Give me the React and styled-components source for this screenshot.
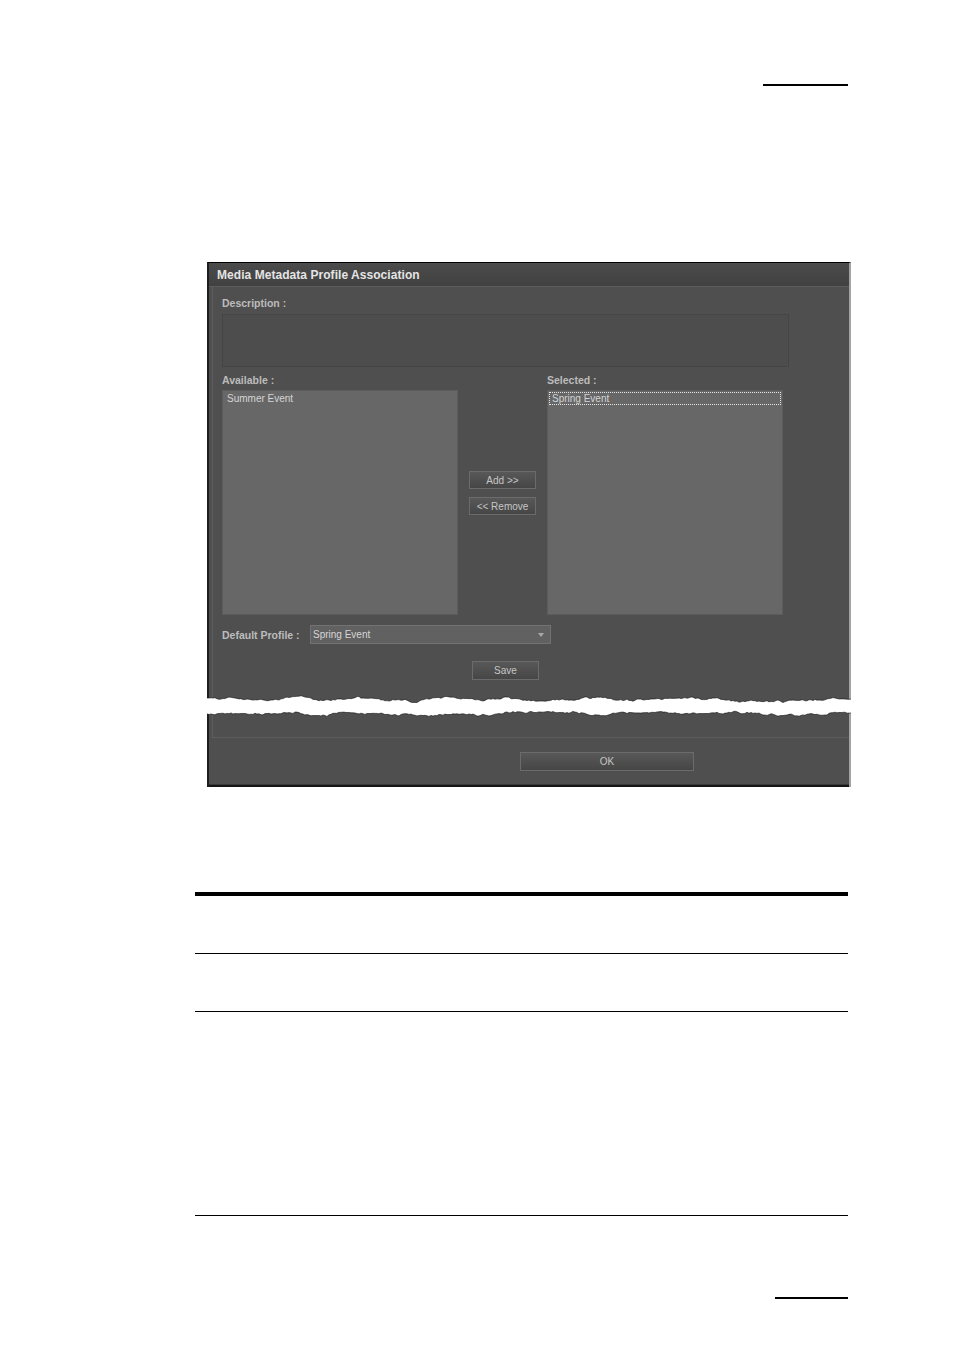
import React from 'react';
import styled, { createGlobalStyle } from 'styled-components';

const GlobalStyle = createGlobalStyle`
  html, body {
    margin: 0;
    padding: 0;
    background: #ffffff;
  }
  body {
    font-family: "Liberation Sans", Arial, sans-serif;
  }
`;

const Page = styled.div`
  width: 653px;
  padding-left: 195px;
  display: flex;
  flex-direction: column;
`;

const Rule = styled.div`
  align-self: flex-end;
  width: ${({ width }) => width}px;
  height: 2px;
  background: #000;
  margin-top: ${({ top }) => top}px;
`;

const Dialog = styled.div`
  width: 640px;
  margin-top: 176px;
  margin-left: 12px;
  border-top: 1px solid #000;
  border-left: 2px solid #1e1e1e;
  border-right: 2px solid #a3a3a3;
  background: #4f4f4f;
  display: flex;
  flex-direction: column;
`;

const TitleBar = styled.div`
  height: 23px;
  border-bottom: 1px solid #5c5c5c;
  background: linear-gradient(#4b4b4b, #414141);
  display: flex;
  align-items: center;
  padding-left: 8px;
  color: #e4e4e4;
  font-size: 12px;
  font-weight: bold;
  letter-spacing: 0.05px;
`;

const Body = styled.div`
  padding-left: 3px;
`;

const Inner = styled.div`
  border-left: 1px solid #5d5d5d;
  padding: 10px 0 14px 9px;
  display: flex;
  flex-direction: column;
`;

const Label = styled.div`
  height: 12px;
  line-height: 12px;
  font-size: 10.5px;
  font-weight: bold;
  color: #bcbcbc;
`;

const DescBox = styled.div`
  width: 565px;
  height: 51px;
  margin-top: 5px;
  border: 1px solid #454545;
  background: #4d4d4d;
`;

const Columns = styled.div`
  display: grid;
  grid-template-columns: 236px 89px 236px;
  margin-top: ${({ top }) => top}px;
`;

const List = styled.div`
  height: 222px;
  border: 1px solid #5c5c5c;
  background: #676767;
  padding: 1px 1px 0 1px;
`;

const Item = styled.div`
  height: 11px;
  line-height: 11px;
  padding-left: 2px;
  font-size: 10px;
  color: #d4d4d4;
  border: 1px ${({ focused }) => (focused ? 'dotted #e6e6e6' : 'solid transparent')};
`;

const Middle = styled.div`
  display: flex;
  flex-direction: column;
  align-items: center;
  gap: 8px;
  padding-top: 81px;
`;

const Button = styled.div`
  box-sizing: border-box;
  width: ${({ width }) => width}px;
  height: ${({ height }) => height || 18}px;
  border: 1px solid #6b6b6b;
  background: linear-gradient(#585858, #464646);
  color: #c6c6c6;
  font-size: 10px;
  display: flex;
  align-items: center;
  justify-content: center;
  margin-left: ${({ left }) => left || 0}px;
  margin-top: ${({ top }) => top || 0}px;
`;

const ProfileRow = styled.div`
  display: flex;
  align-items: center;
  height: 19px;
  margin-top: 10px;
`;

const ProfileLabel = styled(Label)`
  width: 88px;
`;

const Select = styled.div`
  box-sizing: border-box;
  width: 241px;
  height: 19px;
  border: 1px solid #727272;
  background: #616161;
  display: flex;
  align-items: center;
  justify-content: space-between;
  padding: 0 6px 0 2px;
  font-size: 10px;
  color: #d6d6d6;
`;

const Arrow = styled.span`
  width: 0;
  height: 0;
  border-left: 3.5px solid transparent;
  border-right: 3.5px solid transparent;
  border-top: 4px solid #a8a8a8;
`;

const TearStrip = styled.svg`
  display: block;
  margin-left: -2px;
  background: #fff;
`;

const Tail = styled.div`
  margin-left: 3px;
  height: 17px;
  border-left: 1px solid #5d5d5d;
  border-bottom: 1px solid #5d5d5d;
`;

const Footer = styled.div`
  padding: 14px 0 14px 0;
  border-bottom: 2px solid #151515;
  box-shadow: inset 0 -1px 0 #3a3a3a;
`;

const Table = styled.div`
  margin-top: 105px;
  border-top: 4px solid #000;
  display: flex;
  flex-direction: column;
`;

const Row = styled.div`
  height: ${({ height }) => height}px;
  border-bottom: 1px solid #000;
`;

const rand = (n) => {
  const s = Math.sin(n * 127.1 + 311.7) * 43758.5453;
  return s - Math.floor(s);
};

const smooth = (x, seed, scale) => {
  const i = Math.floor(x / scale);
  const f = x / scale - i;
  const a = rand(i + seed);
  const b = rand(i + 1 + seed);
  const t = f * f * (3 - 2 * f);
  return a + (b - a) * t;
};

const W = 644;
const H = 26;

const edge = (fn) => {
  const pts = [];
  for (let x = 0; x <= W; x += 2) pts.push([x, fn(x)]);
  return pts;
};

// torn paper edges
const topEdge = edge((x) => 9 - 5 * smooth(x, 10, 30) - 2 * smooth(x, 50, 6) - 1.2 * rand(x + 100));
const bottomEdge = edge((x) => 16 + 4 * smooth(x, 200, 28) + 2 * smooth(x, 300, 6) + 1.2 * rand(x + 400));

const line = (pts) => pts.map(([x, y]) => `${x},${y.toFixed(1)}`).join(' ');

const Tear = () => {
  const topShape = `M0,0 L${W},0 L${[...topEdge].reverse().map(([x, y]) => `${x},${y.toFixed(1)}`).join(' L')} Z`;
  const bottomShape = `M0,${H} L${W},${H} L${[...bottomEdge].reverse().map(([x, y]) => `${x},${y.toFixed(1)}`).join(' L')} Z`;
  return (
    <TearStrip width={W} height={H} viewBox={`0 0 ${W} ${H}`}>
      <defs>
        <clipPath id="torn">
          <path d={topShape} />
          <path d={bottomShape} />
        </clipPath>
      </defs>
      <g clipPath="url(#torn)">
        <rect x="0" y="0" width={W} height={H} fill="#4f4f4f" />
        <rect x="0" y="0" width="2" height={H} fill="#1e1e1e" />
        <rect x="5" y="0" width="1" height={H} fill="#5d5d5d" />
        <rect x={W - 2} y="0" width="2" height={H} fill="#a3a3a3" />
      </g>
      <polyline points={line(topEdge)} fill="none" stroke="#111" strokeWidth="0.6" />
      <polyline points={line(bottomEdge)} fill="none" stroke="#111" strokeWidth="0.6" />
    </TearStrip>
  );
};

const App = () => (
  <>
    <GlobalStyle />
    <Page>
      <Rule width={85} top={84} />
      <Dialog>
        <TitleBar>Media Metadata Profile Association</TitleBar>
        <Body>
          <Inner>
            <Label>Description :</Label>
            <DescBox />
            <Columns top={7}>
              <Label>Available :</Label>
              <div />
              <Label>Selected :</Label>
            </Columns>
            <Columns top={4}>
              <List>
                <Item>Summer Event</Item>
              </List>
              <Middle>
                <Button width={67}>Add &gt;&gt;</Button>
                <Button width={67}>&lt;&lt; Remove</Button>
              </Middle>
              <List>
                <Item focused>Spring Event</Item>
              </List>
            </Columns>
            <ProfileRow>
              <ProfileLabel>Default Profile :</ProfileLabel>
              <Select>
                Spring Event
                <Arrow />
              </Select>
            </ProfileRow>
            <Button width={67} height={19} left={250} top={17}>Save</Button>
          </Inner>
        </Body>
        <Tear />
        <Tail />
        <Footer>
          <Button width={174} height={19} left={311}>OK</Button>
        </Footer>
      </Dialog>
      <Table>
        <Row height={57} />
        <Row height={57} />
        <Row height={203} />
      </Table>
      <Rule width={73} top={81} />
    </Page>
  </>
);

export default App;
